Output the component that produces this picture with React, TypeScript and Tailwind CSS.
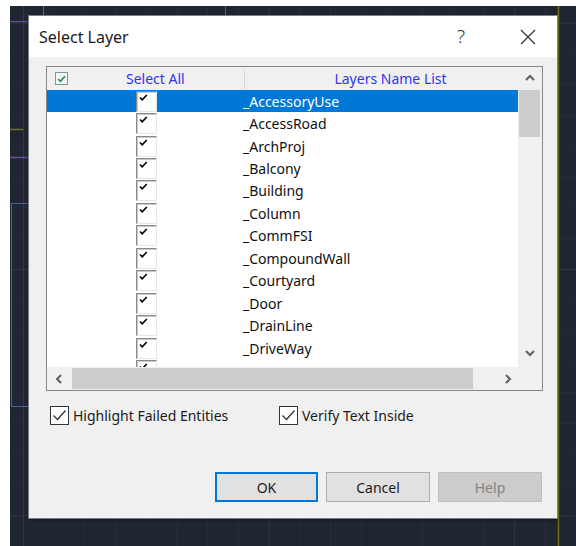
import React from "react";

const layers = [
  "_AccessoryUse",
  "_AccessRoad",
  "_ArchProj",
  "_Balcony",
  "_Building",
  "_Column",
  "_CommFSI",
  "_CompoundWall",
  "_Courtyard",
  "_Door",
  "_DrainLine",
  "_DriveWay",
  "",
];

const ui = { fontFamily: '"Noto Sans", "Open Sans", Arial, sans-serif' };

function CanvasGrid() {
  const minor: number[] = [];
  for (let i = 0; i < 20; i++) minor.push(i);
  return (
    <svg className="absolute inset-0" width="566" height="540" viewBox="0 0 566 540">
      <rect width="566" height="540" fill="#1f2531" />
      {minor.map((i) => {
        const x = 13.5 + i * 30.7;
        const y = 17 + i * 30.8;
        const major = i % 8 === 0;
        return (
          <g key={i}>
            <line x1={x} y1={0} x2={x} y2={540} stroke={major ? "#323a48" : "#262d3a"} strokeWidth="1" />
            <line x1={0} y1={y} x2={566} y2={y} stroke={major ? "#323a48" : "#262d3a"} strokeWidth="1" />
          </g>
        );
      })}
      <line x1="33.5" y1="0" x2="33.5" y2="12" stroke="#6f7030" strokeWidth="1" />
      <line x1="215.5" y1="0" x2="215.5" y2="12" stroke="#6a4f9c" strokeWidth="1" />
      <line x1="0" y1="15.5" x2="20" y2="15.5" stroke="#6a4f9c" strokeWidth="1" />
      <line x1="0" y1="123.5" x2="13" y2="123.5" stroke="#6f7030" strokeWidth="1.5" />
      <line x1="0" y1="151.5" x2="20" y2="151.5" stroke="#6a4f9c" strokeWidth="1.5" />
      <rect x="1.5" y="197.5" width="40" height="203" fill="none" stroke="#3d6ba3" strokeWidth="1" />
      <line x1="548.5" y1="0" x2="548.5" y2="540" stroke="#6f6f1c" strokeWidth="1.5" />
    </svg>
  );
}

function RowCheck() {
  return (
    <div className="w-[21px] h-[21px] shrink-0 bg-white border border-t-[#8a8a8a] border-l-[#8a8a8a] border-r-[#e6e6e6] border-b-[#e6e6e6] shadow-[inset_1px_1px_0_#c8c8c8] relative">
      <svg className="absolute left-[2px] top-[2px]" width="9" height="8" viewBox="0 0 9 8">
        <path d="M1 3.5 L3.2 5.8 L7.8 1" fill="none" stroke="#000" strokeWidth="1.6" />
      </svg>
    </div>
  );
}

function BoxCheck() {
  return (
    <div className="w-[19px] h-[19px] bg-white border border-[#333333] flex items-center justify-center">
      <svg width="15" height="13" viewBox="0 0 15 13">
        <path d="M1.5 6.5 L5.5 10.5 L13.5 1.5" fill="none" stroke="#333333" strokeWidth="1.3" />
      </svg>
    </div>
  );
}

function Chevron({ dir }: { dir: "up" | "down" | "left" | "right" }) {
  const d = {
    up: "M2 7 L6 3 L10 7",
    down: "M2 3 L6 7 L10 3",
    left: "M7 2 L3 6 L7 10",
    right: "M4 2 L8 6 L4 10",
  }[dir];
  return (
    <svg width="12" height="12" viewBox="0 0 12 12">
      <path d={d} fill="none" stroke="#606060" strokeWidth="2" />
    </svg>
  );
}

function LayerList() {
  return (
    <div className="w-[497px] h-[325px] border border-[#828790] bg-white flex flex-col">
      <div className="flex h-[300px]">
        <div className="w-[471px] flex flex-col overflow-hidden">
          <div className="h-[23px] shrink-0 bg-[#f0f0f0] flex items-center text-[14px] text-[#3434ee] relative">
            <div className="w-[197px] h-full flex items-center relative">
              <div className="ml-[8px] w-[13px] h-[13px] border border-[#7a9a9a] bg-[#f4f7f7] flex items-center justify-center">
                <svg width="9" height="8" viewBox="0 0 9 8">
                  <path d="M1 4 L3.4 6.3 L8 1.2" fill="none" stroke="#1e9a4a" strokeWidth="1.7" />
                </svg>
              </div>
              <span className="ml-[58px]">Select All</span>
            </div>
            <div className="w-px h-[20px] bg-[#d6d6d6]" />
            <div className="flex-1 flex justify-center pl-[18px]">Layers Name List</div>
          </div>
          {layers.map((name, i) => (
            <div
              key={i}
              className={`h-[22.45px] shrink-0 flex items-center text-[14px] ${
                i === 0 ? "bg-[#0078d7] text-white" : "text-[#111111]"
              }`}
            >
              <div className="w-[89px] shrink-0" />
              <RowCheck />
              <div className="w-[86px] shrink-0" />
              <span className="whitespace-nowrap">{name}</span>
            </div>
          ))}
        </div>
        <div className="w-[24px] bg-[#f0f0f0] flex flex-col">
          <div className="h-[23px] flex items-center justify-center">
            <Chevron dir="up" />
          </div>
          <div className="h-[47px] ml-px mr-[2px] bg-[#cdcdcd]" />
          <div className="flex-1" />
          <div className="h-[26px] flex items-center justify-center">
            <Chevron dir="down" />
          </div>
        </div>
      </div>
      <div className="h-[23px] flex bg-[#f0f0f0]">
        <div className="w-[25px] flex items-center justify-center">
          <Chevron dir="left" />
        </div>
        <div className="w-[401px] my-px bg-[#cdcdcd]" />
        <div className="w-[24px]" />
        <div className="w-[21px] flex items-center justify-center">
          <Chevron dir="right" />
        </div>
        <div className="flex-1" />
      </div>
    </div>
  );
}

export default function App() {
  return (
    <div className="w-[576px] h-[546px] bg-white pl-[10px] pt-[6px] overflow-hidden" style={ui}>
      <div className="relative w-[566px] h-[540px]">
        <CanvasGrid />
        <div className="absolute left-[18px] top-[9px] w-[530px] h-[504px] bg-[#f0f0f0] border border-[#7c7f86] shadow-[0_1px_2px_rgba(0,0,0,0.4)] flex flex-col">
          <div className="h-[41px] shrink-0 bg-white flex items-center pl-[10px] text-[16px] text-[#1a1a1a]">
            <span className="flex-1">Select Layer</span>
            <span className="text-[19px] font-light text-[#333] mr-[55px]">?</span>
            <svg className="mr-[21px]" width="16" height="16" viewBox="0 0 16 16">
              <path d="M1 1 L15 15 M15 1 L1 15" stroke="#333" strokeWidth="1.2" />
            </svg>
          </div>
          <div className="pl-[17px] pt-[9px]">
            <LayerList />
          </div>
          <div className="flex items-center pl-[21px] mt-[14px] text-[14px] text-[#1a1a1a]">
            <BoxCheck />
            <span className="ml-[4px] w-[206px]">Highlight Failed Entities</span>
            <BoxCheck />
            <span className="ml-[4px]">Verify Text Inside</span>
          </div>
          <div className="mt-auto mb-[16px] mr-[15px] flex justify-end gap-[8px] text-[14px]">
            <div className="w-[103px] h-[30px] bg-[#e1e1e1] border-2 border-[#0078d7] flex items-center justify-center text-[#1a1a1a]">
              OK
            </div>
            <div className="w-[104px] h-[30px] bg-[#e1e1e1] border border-[#adadad] flex items-center justify-center text-[#1a1a1a]">
              Cancel
            </div>
            <div className="w-[104px] h-[30px] bg-[#cccccc] border border-[#bfbfbf] flex items-center justify-center text-[#838383]">
              Help
            </div>
          </div>
        </div>
      </div>
    </div>
  );
}
